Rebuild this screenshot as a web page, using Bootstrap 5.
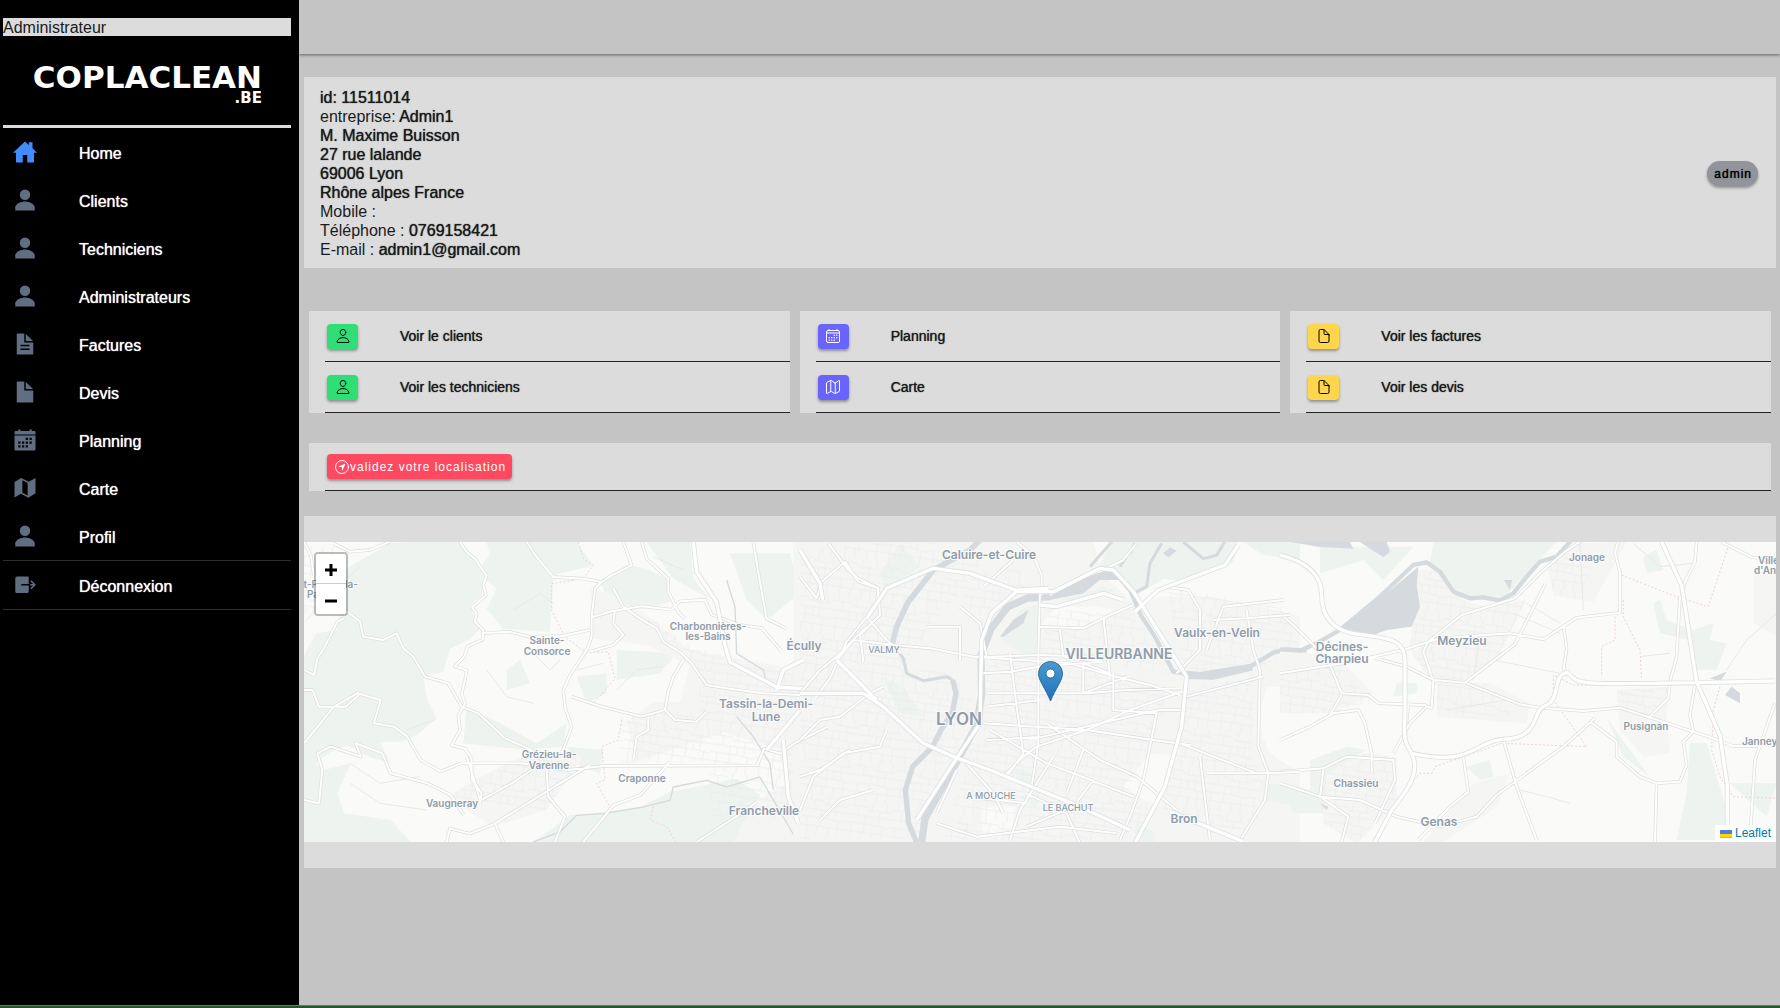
<!DOCTYPE html>
<html lang="fr">
<head>
<meta charset="utf-8">
<meta name="viewport" content="width=device-width, initial-scale=1">
<title>Coplaclean – Administrateur</title>
<link rel="stylesheet" href="https://cdn.jsdelivr.net/npm/bootstrap@5.3.0/dist/css/bootstrap.min.css">
<style>
  :root { --page: #c4c4c4; --panel: #dcdcdc; --slate: #5f6e80; }
  body { background: var(--page); color: #1a1a1c; font-family: "Liberation Sans", Arial, sans-serif; font-size: 16px; line-height: 19px; }
  .medium { text-shadow: 0 0 1px currentColor; }
  .side { width: 299px; background: #000; padding: 18px 8px 0 3px; }
  .role { background: var(--panel); line-height: 16px; padding-top: 2px; }
  .brand { height: 89px; }
  .menu-rule { height: 3px; background: var(--panel); }
  .menu a { height: 48px; padding: 3px 0 0 10px; gap: 42px; color: #fff; text-decoration: none; line-height: 20px; }
  .menu svg { width: 24px; height: 24px; margin-bottom: 3px; fill: var(--slate); }
  .menu .active svg { fill: #428cff; }
  .menu .ruled { border-bottom: 1px solid #2e2e2e; height: 49px; }
  .topbar { height: 54px; box-shadow: 0 1px 3px rgba(0,0,0,.5); margin-bottom: 23px; }
  .content { padding: 0 4px 0 5px; }
  .panel { background: var(--panel); }
  .identity { padding: 11px 18px 9px 16px; margin-bottom: 43px; }
  .tag-btn { border: 0; color: #000; font-size: 12px; line-height: 15px; letter-spacing: 1px; box-shadow: 0 2px 3px rgba(0,0,0,.35); height: 25px; }
  .role-chip { background: #92949c; border-radius: 13px; padding: 1px 6px 0 7px; }
  .tiles { gap: 10px; padding: 0 5px; margin-bottom: 30px; }
  .tile { flex: 1 1 0; padding-left: 16px; }
  .tile-row { border-bottom: 1px solid #222428; height: 51px; padding-left: 2px; gap: 42px; font-size: 14px; }
  .tag-btn svg { width: 16px; height: 16px; fill: none; stroke: currentColor; stroke-width: 32; stroke-linejoin: round; stroke-linecap: round; }
  .square-btn { width: 31px; border-radius: 4px; padding: 0; }
  .green { background: #2fdf75; } .violet { background: #6a64ff; color: #fff; } .yellow { background: #ffd54b; }
  .red { background: #ff4961; color: #fff; border-radius: 4px; padding: 1px 6px 0 7px; }
  .locate { margin: 0 5px 25px; padding-left: 16px; }
  .locate-row { border-bottom: 1px solid #222428; height: 48px; padding-left: 2px; }
  .map-panel { padding: 26px 0; }
  .map { height: 300px; background: #fafaf8; overflow: hidden; }
  .map > .map-art { width: 100%; height: 300px; display: block; }
  .zoom-box { top: 10px; left: 10px; border: 2px solid rgba(0,0,0,.25); border-radius: 4px; background-clip: padding-box; z-index: 2; }
  .zoom-box button { width: 30px; height: 30px; border: 0; background: #fff; color: #000; padding: 3px 0 0; }
  .zoom-box button:first-child { border-bottom: 1px solid #ccc; border-radius: 2px 2px 0 0; }
  .zoom-box button:last-child { border-radius: 0 0 2px 2px; }
  .zoom-box svg { width: 14px; height: 14px; stroke: #000; stroke-width: 3; }
  .credit { right: 0; bottom: 0; background: rgba(255,255,255,.8); padding: 0 5px; font-size: 12px; line-height: 17px; }
  .credit a { color: #0078a8; text-decoration: none; }
  .footline { height: 3px; background: #22592b; border-top: 1px solid #5d7f60; }
  .pin { left: 50%; top: 119px; margin-left: -2px; width: 25px; height: 41px; }
  .green-land { fill: #edf3ef; } .town { fill: #f5f5f4; } .water { fill: #d4dadd; }
  .river { fill: none; stroke: #d4dadd; stroke-linejoin: round; }
  .lane { fill: none; stroke: #e7e8e8; stroke-width: 3; }
  .edge { fill: none; stroke: #dcdddd; stroke-width: 10; stroke-linejoin: round; }
  .way { fill: none; stroke: #fff; stroke-width: 6; stroke-linejoin: round; }
  .edge-big { fill: none; stroke: #dfe0e0; stroke-width: 15; stroke-linejoin: round; }
  .way-big { fill: none; stroke: #fff; stroke-width: 10; stroke-linejoin: round; }
  .bound { fill: none; stroke: #efd0d2; stroke-width: 3; stroke-dasharray: 6 6; }
  .places { font-family: Inter, "Open Sans", sans-serif; font-weight: 600; fill: #8f9cab; text-anchor: middle; paint-order: stroke; stroke: #fafaf8; stroke-width: 2px; font-size: 10px; }
  .places .mid { font-size: 12px; } .places .quarter { font-size: 9px; font-weight: 500; }
  .places .town-cap { font-size: 14px; } .places .city { font-size: 17px; }
  .places .from { text-anchor: start; } .places .until { text-anchor: end; }
</style>
<script src="https://cdn.jsdelivr.net/npm/bootstrap@5.3.0/dist/js/bootstrap.bundle.min.js" defer></script>
</head>
<body class="d-flex flex-column min-vh-100">
<svg width="0" height="0" class="position-absolute" aria-hidden="true">
  <symbol id="person" viewBox="0 0 512 512"><path d="M256 256a112 112 0 10-112-112 112 112 0 00112 112zm0 32c-69 0-208 43-208 128v64h416v-64c0-85-139-128-208-128z"/></symbol>
  <symbol id="person-o" viewBox="0 0 512 512"><path d="M344 144c-4 53-44 96-88 96s-84-43-88-96c-4-55 35-96 88-96s92 42 88 96zM256 304c-87 0-175 48-192 139-2 11 4 21 16 21h352c12 0 18-10 16-21-16-91-105-139-192-139z"/></symbol>
  <symbol id="file-o" viewBox="0 0 512 512"><path d="M416 221v195a48 48 0 01-48 48H144a48 48 0 01-48-48V96a48 48 0 0148-48h99a32 32 0 0122 9l142 142a32 32 0 019 22zM256 56v120a32 32 0 0032 32h120"/></symbol>
</svg>

<div class="d-flex flex-grow-1">
  <aside class="side flex-shrink-0">
    <div class="role">Administrateur</div>
    <svg class="brand d-block w-100" viewBox="0 0 288 89" role="img" aria-label="Coplaclean.be">
      <g fill="#fff" font-family="DejaVu Sans, sans-serif" font-weight="700" text-anchor="end">
        <text x="259" y="52" font-size="31">COPLACLEAN</text><text x="259" y="67" font-size="15">.BE</text>
      </g>
    </svg>
    <div class="menu-rule"></div>
    <nav class="menu medium">
      <a href="#" class="d-flex align-items-center active"><svg viewBox="0 0 512 512"><path d="M416 175V48h-80v58L256 32 0 272h64v208h144V320h96v160h144V272h64z"/></svg>Home</a>
      <a href="#" class="d-flex align-items-center"><svg><use href="#person"/></svg>Clients</a>
      <a href="#" class="d-flex align-items-center"><svg><use href="#person"/></svg>Techniciens</a>
      <a href="#" class="d-flex align-items-center"><svg><use href="#person"/></svg>Administrateurs</a>
      <a href="#" class="d-flex align-items-center"><svg viewBox="0 0 512 512"><path d="M272 42v146a4 4 0 004 4h146a2 2 0 001-3L275 40a2 2 0 00-3 2z"/><path d="M248 224a8 8 0 01-8-8V32H92a12 12 0 00-12 12v424a12 12 0 0012 12h328a12 12 0 0012-12V224zm104 160H160v-32h192zm0-80H160v-32h192z"/></svg>Factures</a>
      <a href="#" class="d-flex align-items-center"><svg viewBox="0 0 512 512"><path d="M272 42v146a4 4 0 004 4h146a2 2 0 001-3L275 40a2 2 0 00-3 2z"/><path d="M248 224a8 8 0 01-8-8V32H92a12 12 0 00-12 12v424a12 12 0 0012 12h328a12 12 0 0012-12V224z"/></svg>Devis</a>
      <a href="#" class="d-flex align-items-center"><svg viewBox="0 0 512 512"><path d="M456 64h-56V32h-48v32H160V32h-48v32H56c-13 0-24 11-24 24v48h448V88c0-13-11-24-24-24z"/><path fill-rule="evenodd" d="M32 160v296a24 24 0 0024 24h400a24 24 0 0024-24V160zm80 128h48v48h-48zm0 80h48v48h-48zm80-80h48v48h-48zm0 80h48v48h-48zm80-160h48v48h-48zm0 80h48v48h-48zm0 80h48v48h-48zm80-160h48v48h-48zm0 80h48v48h-48z"/></svg>Planning</a>
      <a href="#" class="d-flex align-items-center"><svg viewBox="0 0 512 512"><path fill-rule="evenodd" d="M32 128L176 40l160 80 144-80v328l-152 96-160-88-136 80zM200 92v264l112 60V148z"/></svg>Carte</a>
      <a href="#" class="d-flex align-items-center ruled"><svg><use href="#person"/></svg>Profil</a>
      <a href="#" class="d-flex align-items-center ruled"><svg viewBox="0 0 512 512"><path d="M336 96a24 24 0 00-24-24H88a40 40 0 00-40 40v276a40 40 0 0040 40h208a40 40 0 0040-40V266H176v-32h160z"/><path d="M368 234h60l-58-58 22-22 96 96-96 96-22-22 58-58h-60z"/></svg>Déconnexion</a>
    </nav>
  </aside>

  <div class="flex-grow-1">
    <header class="topbar"></header>
    <main class="content">
      <section class="panel identity d-flex align-items-center justify-content-between">
        <div>
          <div class="medium">id: 11511014</div>
          <div>entreprise: <span class="medium">Admin1</span></div>
          <div class="medium">M. Maxime Buisson</div>
          <div class="medium">27 rue lalande</div>
          <div class="medium">69006 Lyon</div>
          <div class="medium">Rhône alpes France</div>
          <div>Mobile :</div>
          <div>Téléphone : <span class="medium">0769158421</span></div>
          <div>E-mail : <span class="medium">admin1@gmail.com</span></div>
        </div>
        <button type="button" class="tag-btn role-chip medium">admin</button>
      </section>

      <section class="tiles d-flex">
        <div class="panel tile">
          <div class="tile-row medium d-flex align-items-center"><button type="button" aria-label="Clients" class="tag-btn square-btn green d-flex align-items-center justify-content-center"><svg><use href="#person-o"/></svg></button>Voir le clients</div>
          <div class="tile-row medium d-flex align-items-center"><button type="button" aria-label="Techniciens" class="tag-btn square-btn green d-flex align-items-center justify-content-center"><svg><use href="#person-o"/></svg></button>Voir les techniciens</div>
        </div>
        <div class="panel tile">
          <div class="tile-row medium d-flex align-items-center"><button type="button" aria-label="Planning" class="tag-btn square-btn violet d-flex align-items-center justify-content-center"><svg viewBox="0 0 512 512"><rect x="48" y="80" width="416" height="384" rx="48"/><path d="M128 48v32M384 48v32M464 160H48"/><path stroke-width="48" d="M296 232h1M376 232h1M296 312h1M376 312h1M136 312h1M216 312h1M136 392h1M216 392h1M296 392h1"/></svg></button>Planning</div>
          <div class="tile-row medium d-flex align-items-center"><button type="button" aria-label="Carte" class="tag-btn square-btn violet d-flex align-items-center justify-content-center"><svg viewBox="0 0 512 512"><path d="M313 125L199 51a32 32 0 00-29 0L57 111a16 16 0 00-9 14v322a16 16 0 0023 14l105-58a32 32 0 0130 0l101 57a32 32 0 0030 0l118-60a16 16 0 009-14V65a16 16 0 00-23-14l-99 72a32 32 0 01-29 2zM328 128v336M184 48v352"/></svg></button>Carte</div>
        </div>
        <div class="panel tile">
          <div class="tile-row medium d-flex align-items-center"><button type="button" aria-label="Factures" class="tag-btn square-btn yellow d-flex align-items-center justify-content-center"><svg><use href="#file-o"/></svg></button>Voir les factures</div>
          <div class="tile-row medium d-flex align-items-center"><button type="button" aria-label="Devis" class="tag-btn square-btn yellow d-flex align-items-center justify-content-center"><svg><use href="#file-o"/></svg></button>Voir les devis</div>
        </div>
      </section>

      <section class="panel locate">
        <div class="locate-row d-flex align-items-center"><button type="button" class="tag-btn red d-flex align-items-center"><svg viewBox="0 0 512 512"><circle cx="256" cy="256" r="208"/><path fill="currentColor" stroke="none" d="M358 165L274 363c-4 9-17 6-17-3l-1-96a8 8 0 00-8-8l-96-1c-9 0-12-13-3-17l198-84a9 9 0 0111 11z"/></svg>validez votre localisation</button></div>
      </section>

      <section class="panel map-panel">
        <div class="map position-relative">
          <div class="zoom-box position-absolute d-flex flex-column">
            <button type="button" aria-label="Zoom avant" class="d-flex align-items-center justify-content-center"><svg viewBox="0 0 14 14"><path d="M1 7h12M7 1v12"/></svg></button>
            <button type="button" aria-label="Zoom arrière" class="d-flex align-items-center justify-content-center"><svg viewBox="0 0 14 14"><path d="M1 7h12"/></svg></button>
          </div>
          <svg class="map-art" viewBox="0 0 1472 300" preserveAspectRatio="xMidYMid slice" role="img" aria-label="Carte de Lyon">
            <defs>
              <pattern id="blocks" width="132" height="120" patternUnits="userSpaceOnUse" patternTransform="rotate(8)">
                <path fill="none" stroke="#e9eaea" stroke-width="2" d="M0 14h60l8 10h64M0 42h34v-28M34 42h98M0 66h80v-24M80 66l52 6M0 92h50v28M50 92h82M22 0v14M58 42v50M100 24v42M112 70v50M20 66v54M84 92v28M76 0v24M120 0v24"/>
              </pattern>
              <g id="west-roads">
                <path d="M480 96l20 30 25 20 20 30 15 20-10 30 8 30-30 25-12 10 14 20-5 25 25 25-2 28-45 20-10 30-28 30 35 12-5 30-10 40 10 30-20 35 5 45-25 45 40 10 20 30 0 60 30 45-5 30M548 370l80-5 60 15 100-2 80-18M680 96l30 45 50 60 90 5 55 10 30-20 60-30-25-70M905 216l-20 20-10 85 0 60-15 40-50 75-20 45 5 50 20 60-30 80M940 235l30 55 50 35 50 30 20 40 55 35 30 30 45 65 60 10 110 15 110 5M945 300l-5 40 30 35-30 30-70 20M875 322l60-18 90-15 90 10 25-25 75-5 20 45 80 30 70 10 60 70M1025 96l15 50 65 60 0 40 30 60 20 20M1150 450l-30 50-15 45-10 55 30 30 65 5 30-30M815 560l90 30 120 30 70-20M1045 620l0 40-35 20-10 75M12 700l90-110 70-40 70 20-20 70 60 10 40 30 40 70 60 35 60-25 180 0 140 20 110-12 460-2 20-50 50 15 40-30 100-50M12 480l30 15 10-50 20-30 40-80 20-10M135 300l45 35 10 45 60 10 40-20 20 45 30 25 35 60 70 20 40 70 50 20 80 75 80 35 30 30M12 870l45 10 10-100-15-50 40-20 90 30-15-40 80 30 25 60 110 30 70 35 40 60M585 940l285-175M545 870l90-50 60-40M740 780l5 80 50 60-30 76M440 996l10-40 60 15 75-30 25 55M850 996l90-110 80-30 90-100M500 740l20 60 20 70M12 540l25 0 20 50 80 0 40-35M1190 996l140-90 40-30M1360 96l20 120 20 110 60 30M12 96l20 40 10 60M100 100l50 25 60-5 60-25"/>
              </g>
              <g id="mid-roads">
                <path d="M0 200l50 65 15-50 70-60 40 60 60 20-5 50-90 110-50 110-45 60M0 550l60-70 50-40 90-90M0 690l60-60 60-10 90-70 40-20M0 900l40-100 90-70 110-20 20-50M85 100l60 80 30 25 60 30 5 80-60 60 10 80M200 320l60 70 45 40M110 450l50-60 120 15 110 10 130 25 60 0 140-5 160 5M520 440l290 20 120 35 120 30 90 30M720 240l-5 200 0 260-20 130M630 430l20 160 20 140-50 70M545 490l90-5 80-15 190-15M560 550l300 0 120-10 160-5M560 590l160-20M550 640l310 20 200 30 110 15M560 690l170-10 300-70 50-10 80 0M570 660l170 100 80 30 180 70M740 640l160 110 110 50 120 100M850 720l-50 130M610 800l60-60 40-30 150-50 130-60 170-60M490 750l90 100 30 60M680 850l120 60 40 90M760 740l-100 160-30 90M470 780l-60 130M500 860l180 20M850 550l0-90 80 30M940 490l0 110 130 10-40 200-40 110-30 70M980 500l-130 50M1010 100l-40 50-60 30-90 30M650 96l50 40 25 60 0 60M550 230l90-80M480 290l60 50 20 100M380 350l100 0 0 100M720 350l130 5 80-40 70-30M780 360l10 80 120 15M1130 490l70-70 0-120-35-60-70-10M1240 330l100-5 130-10M1220 420l50-130 180-20M1340 300l20 120 20 60-5 230 30 80-10 80-80 130M1200 740l30 250M1160 560l230-60M1400 790l100-5M1400 790l-180 0M0 800l60-20 90-60M410 940l120 40 250-30 170 20M60 930l60-60 100-30M880 810l-60 80-140 60M930 500l-20-180M1140 700l230 90"/>
              </g>
              <g id="east-roads">
                <path d="M0 310l40 35 60 60 50 60 35 85 80 5 30 25 140 5 20 10 5-80-30-90 15-30 100-80 160-50 80-80 70-60 60-40 100-5M465 510l90 8 150-115 90-180M555 518l165 65 60 10 130 10 110-10 90 30 170 55 80 30 80 0M0 690l90-40 70-40 75-10 20 40 20 90 0 60M150 615l35-60M370 420l110-35 210-15 100 18 100-65 130-15 0-120-15-60 20-70M850 345l10 70-10 70M340 730l50-90 50-50M0 820l120 40 120 10 110 50 130 30 110-30 60-65 200-145 95-85M0 785l130-10 70-35 140 10 5 60-60 130M120 860l10-80M120 860l85 60-20 76M670 690l40 140 60 160M930 635l80 60 0 45 70 60 50 20 70-5 20-50-10-70 30-30-10-50 15-90M1130 820l-5 176M1170 515l-5 50-60 60M1200 260l-10 180-20 75M1250 96l-5 60-30 60-10 40M1325 96l90 45 70 15M1485 580l-60 170-15 240M550 740l15 105-60 50-90 95M0 490l190-30 180-40M270 440l110 30 90 45M375 690l10-110"/>
              </g>
              <g id="mid-fast">
                <path d="M0 120l60 100 8 50M200 325l60-90 140-60 110 15 150 55 100 0 100-50 40-20 40 5 60 65 120 190 40 65-15 150-50 180-90 170M720 285l50 5 140-40 60 20M1005 305l70-65 200-75 40-60M0 550l190 0 60 40 120 110 90 40 110 40 270 110 150 70M350 930l110-170 80-120 5-250 30-80 80-70 90-5M1110 905l220 90M110 450l120 120"/>
              </g>
              <g id="east-fast"><path d="M0 135c80 20 125 60 125 120 0 60 30 100 90 115 100 15 165 10 160 90l0 140c0 80-10 80 20 130 30 60-20 120-60 170l-50 96M395 730c180 40 180-30 270-42 120 0 90-90 130-100 50-20 20-100 70-100 30 40 50 35 380 30l240-5M1145 96l60 130 45 290 70 160 22 150 0 170"/></g>
              <g id="west-fast"><path d="M1180 96l10 90 60 90 25 130 15 50 140 75 80 5M1430 540l20-60 60-30M1450 690l15 170 30 80M1400 720l100-120"/></g>
            </defs>
            <g transform="translate(-4 -32) scale(.3333)">
              <path class="green-land" d="M270 100l60-4h150l50 60 20 50-5 50-35 30 30 70-30 30-60 30-20 70-60 10 10 70 30 60-60 50-50 20-60 0 30 60-50-10-80-40-50 20-70 60-60 10V480l30 20 30-80 30-50 60-10 10-60-40-40 20-50 50-40zM560 96h270l50 70-120 30-10 170-140-10-50-60 30-60-60-50 40-50zM900 216l90-50 50 10 60 30 10 70-80 20-100-20zM1040 96h130l10 110 50 60-110-60zM950 420l180 10-50 60-130 20zM500 590l100 50 110 60 90-60-10 70-110 10-190-20zM700 996l110-80 200-20 100-50 200-40 70 50-60 140zM12 740l60 40 80-20-40 90 20 60 140 20 60 66H12zM1290 130h180l30 120-100 80-60-60zM1170 480l130 20-40 90-80-10zM620 480l40-30 30 70-70 20zM830 500l90-10 0 60-60 30zM800 710l110 10-10 70-60-20z"/>
              <path class="town" d="M870 240l60 10 130 80 110 90 330 60V996h-200l60-120 110-60-40-100-160-50-260 90-30-120 80-60 80 0 30-110-130-60-160-20zM440 860l100-60 170-80 140 20-110 160-160 50z"/>
              <path fill="url(#blocks)" d="M960 620l200-20 200 60-40 90-360 10zM1000 290l180 120 320 90v430l-260-10-50-430zM440 860l270-140 140 20-110 160zM12 110h90v200H12z"/>
              <path class="lane" d="M20 330l80-90 80-70M150 760l90 60 120-20M560 480l60 80 80 20M640 300l80-50 40 30M690 420l60 60 30-30M830 480l80-20M150 820l90 60 140 20M320 660l80-30M950 540l60-60 80-10M1060 140l90 40"/>
              <path class="river" stroke-width="4" d="M700 996l80-30 50-50 80-5 120-20 80-20 10-40 100-20 60 20 100-30 35 60 70 120M1280 210l25 80 5 140 80 50 10 40M1310 620l50 60 50 80 10 80"/>
              <path class="bound" d="M835 96l15 50 30 20-30 40-95 15 0 80 40 80 60 45 70 0 20 80-70 80M965 630l-10 60-50 20 10 100-25 10 45 80M1060 890l-10 40 50 20 30 50"/>
            </g>
            <g transform="translate(496 -32) scale(.3333)">
              <path class="town" d="M-20 96h900l30 100 110 100 100-60 380 80v680H-20z"/>
              <path fill="#fafaf8" d="M1300 130l200 10v180l-200-60-230 0 60-50zM1050 730l80 10-60 150-100-60zM770 290l120 0 50 10-80 50-140-5zM545 890l100 0-10 90-90 0zM1400 530h100v260l-90-60-40-90z"/>
              <path class="green-land" d="M930 96h380l-10 60-140 60-70-10-80 50-60-50-50-40zM600 380l60-80 60-20-5 150-40 10zM780 270l130-40 40 10-100 30zM300 100l60 70-100 70-20-50zM1390 820l110 10v60l-110-20zM660 860l60-15-10 50zM1010 940l60 30-10 26h-60zM250 500l60 30 60 90-70-10zM640 770l60 20 0 40-40-10zM1330 96h170v50l-110-10z"/>
              <path fill="url(#blocks)" d="M0 130l200-30 200-4 150 60-250 320 150 10 70 80-60 200-100 220H0zM550 450l500 60 60 30-60 190-80 130 90 60-50 70H430l60-190zM750 300l250 10 100 180-380-60zM1100 230l340 60 60 120-110 60-240 20zM1150 530l220-30-20 240 50 60-60 170-250-60zM470 220l170-60 60 80-90 30-70 80z"/>
              <path class="river" stroke-width="22" d="M365 996l10-70 95-170 60-110 15-90-2-120 30-80 50-65 60-27 67-4"/>
              <path class="water" d="M740 265l90-50 50-40 60 5 20 30-60 0-50 40-100 20zM600 380l40-50 45-30-15 40-60 40zM1090 130l20-18 20 10-25 20zM1160 482l40 4 150-25 10 20-120 28-80-2z"/>
              <path class="river" stroke-width="17" d="M540 90l-30 30-110 60-75 95-35 75-14 55"/>
              <path class="river" stroke-width="9" d="M276 400l34 45 10 45 50 22 70-12 18 10"/>
              <path class="river" stroke-width="16" d="M458 510l10 40-10 55-35 55-25 50-60 60-22 70 10 100 25 60"/>
              <path class="river" stroke-width="13" d="M940 180l50 60 35 80 40 60 55 105 60 10M1350 470l70-42 40-10 60 4"/>
              <path class="river" stroke-width="9" d="M870 170l70-80M1000 250l40-20 10-70 35-60M1150 96l60 50 40-10 30-50M960 170l20-30M990 130l15-30"/>
            </g>
            <g transform="translate(976 -32) scale(.3333)">
              <path class="town" d="M410 180l60 0 50 80 100 30 120-20-90 180-100 60-100 0-60-90zM0 420l170 20 110 110-120 60-160 0zM120 770l140-40 90 10 0 140-120 120-100-60zM470 520l160 0 120 60-10 60-270-20zM800 150l100-50 140-4-100 180-120-20zM1010 540l160-10-10 80 10 120-80 10-70-80zM580 820l110-30-40 100-160 106h-60zM1420 200l70-30v210l-70-40z"/>
              <path fill="url(#blocks)" d="M410 180l60 0 50 80 100 30 120-20-90 180-100 60-100 0-60-90zM0 480l170-20 110 110-120 40-160 0zM120 770l140-40 90 10 0 140-120 120-100-60zM470 520l160 0 70 100-230-10zM800 150l100-50 40 60-40 110-80-20zM1010 540l160-10-60 90-90-20z"/>
              <path class="green-land" d="M460 96h370l-50 50-110 120-80-10-60 10-80-100zM120 110h280l-90 100-60-60-130 40zM90 750l110-40 60 10-120 70-10 120-90 0-40-90 90 20zM1120 280l20-10 20 60 80 30 60-20-10 50 50 10-30 80-60 0-20-90-90-20zM1230 700l50 0 60 200-10 90-140 0 30-140zM980 620l40 60 90 120-80-60zM560 770l70-20 10 50-40 10zM1350 820l140 0-30 100zM1090 140l40-20 20 60-50 10zM350 520l60 0 0 30-70 10z"/>
              <path class="lane" d="M700 310l140 60M500 600l180-30M600 380l-20 130M740 280l100 60M1080 440l90-10M1340 480l60-90 90-80M640 450l200 40M900 100l10 200M720 840l80 20 70 20M1060 100l80 70 100-10"/>
              <path class="river" stroke-width="13" d="M0 418l60 4 50-22 70-40 120-100 100-95 40-8 40 28 40 60 50 20 40-3 50 10 40-22 40-50 40-45 50-15 45-50"/>
              <path class="water" d="M180 355l50-30 185-155-5 55 10 65-25 60-75 10-40 15zM30 96h180l10 20-100-5zM240 96h80l10 30-20 15-40-25zM672 210l24 0-6 30zM1355 530l25 20 0 30-45-25zM1290 505l50-20-20 30zM120 880l25 10-5 10z"/>
              <path class="bound" d="M410 800l10-10 35 0 10-20 130-45 70-25 255 10-100-140 0-75 60 30 100 0M1025 195l150 60 110 35 60-180M1030 270l0 50 50 100 5 90M1005 320l0 70-40 20 0 90M1320 530l-20 70-5 120 25 80 40 60 130 5"/>
            </g>
            <g transform="translate(-4 -32) scale(.3333)"><use href="#west-roads" class="edge"/><use href="#west-roads" class="way"/><use href="#west-fast" class="edge-big"/><use href="#west-fast" class="way-big"/></g>
            <g transform="translate(976 -32) scale(.3333)"><use href="#east-roads" class="edge"/><use href="#east-roads" class="way"/></g>
            <g transform="translate(496 -32) scale(.3333)"><use href="#mid-roads" class="edge"/><use href="#mid-roads" class="way"/><use href="#mid-fast" class="edge-big"/><use href="#mid-fast" class="way-big"/></g>
            <g transform="translate(976 -32) scale(.3333)"><use href="#east-fast" class="edge-big"/><use href="#east-fast" class="way-big"/></g>
            <g class="places">
              <text class="until" x="54" y="46">St-Pierre-la-</text><text class="from" x="3" y="56">Palud</text>
              <text x="243" y="102">Sainte-</text><text x="243" y="113">Consorce</text>
              <text x="404" y="88">Charbonnières-</text><text x="404" y="98">les-Bains</text>
              <text x="245" y="216">Grézieu-la-</text><text x="245" y="227">Varenne</text>
              <text x="338" y="240">Craponne</text><text x="148" y="265">Vaugneray</text>
              <text class="mid" x="500" y="108">Écully</text>
              <text class="mid" x="462" y="166">Tassin-la-Demi-</text><text class="mid" x="462" y="179">Lune</text>
              <text class="mid" x="460" y="273">Francheville</text>
              <text class="mid" x="685" y="17">Caluire-et-Cuire</text>
              <text class="mid" x="913" y="95">Vaulx-en-Velin</text>
              <text class="town-cap" x="815" y="117">VILLEURBANNE</text>
              <text class="city" x="655" y="183">LYON</text>
              <text class="quarter" x="580" y="111">VALMY</text><text class="quarter" x="687" y="257">A MOUCHE</text><text class="quarter" x="764" y="269">LE BACHUT</text>
              <text class="mid" x="880" y="281">Bron</text>
              <text class="mid" x="1038" y="109">Décines-</text><text class="mid" x="1038" y="121">Charpieu</text>
              <text class="mid" x="1158" y="103">Meyzieu</text><text x="1283" y="19">Jonage</text>
              <text class="from" x="1454" y="22">Villette-</text><text class="from" x="1450" y="32">d'Anthon</text>
              <text x="1342" y="188">Pusignan</text><text class="from" x="1438" y="203">Janneyrias</text>
              <text x="1052" y="245">Chassieu</text><text class="mid" x="1135" y="284">Genas</text>
            </g>
          </svg>
          <svg class="pin position-absolute" viewBox="0 0 25 41" aria-hidden="true">
            <defs><linearGradient id="pinfill" x2="0" y2="1"><stop stop-color="#4a9bd0"/><stop offset="1" stop-color="#1f6fbf"/></linearGradient></defs>
            <path d="M12.5 .5a12 12 0 0112 12c0 7-7 15-12 27.500C7.500 27.500 .5 19.500 .5 12.500a12 12 0 0112-12z" fill="url(#pinfill)" stroke="#2e6c97"/><circle cx="12.500" cy="12.500" r="4.500" fill="#fff" stroke="#2e6c97"/>
          </svg>
          <div class="credit position-absolute"><a href="#"><svg width="12" height="8" viewBox="0 0 12 8" aria-hidden="true"><path fill="#4C7BE1" d="M0 0h12v4H0z"/><path fill="#FFD500" d="M0 4h12v3H0z"/><path fill="#E0BC00" d="M0 7h12v1H0z"/></svg> Leaflet</a></div>
        </div>
      </section>
    </main>
  </div>
</div>
<div class="footline"></div>
</body>
</html>
